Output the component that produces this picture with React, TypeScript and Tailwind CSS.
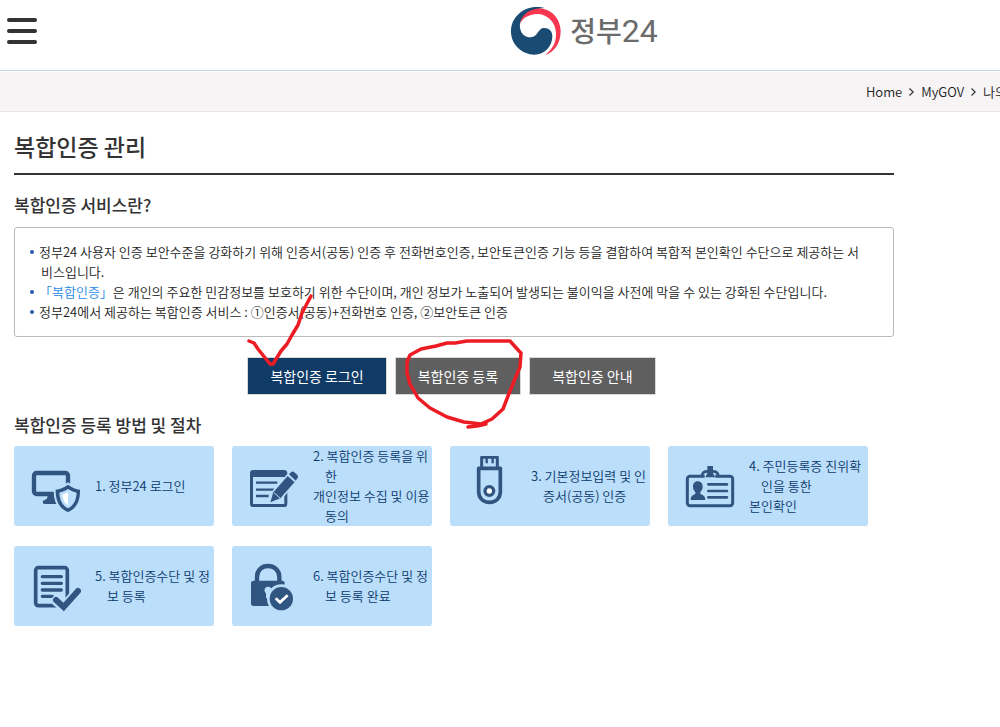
import type { ReactNode } from "react";

const INK = "#2f5580";
const CARD = "#bbdefb";

const StepIcon = ({ children }: { children: ReactNode }) => (
  <svg className="ml-[17px] h-[60px] w-[50px] shrink-0" viewBox="63 48 150 180" fill="none" aria-hidden="true">
    {children}
  </svg>
);

const MonitorIcon = () => (
  <StepIcon>
    <rect x="72" y="99" width="102" height="63" rx="8" stroke={INK} strokeWidth="13" />
    <path d="M113 166h34v14h6v12H104q-6 0-6-6t8-7q7-2 7-13Z" fill={INK} />
    <path
      d="M174 134C161 144 149 147 137 149C136 181 148 206 174 216C200 206 211 181 210 149C198 147 187 144 174 134Z"
      fill={INK}
      stroke={CARD}
      strokeWidth="12"
      paintOrder="stroke"
    />
    <path d="M174 147C165 153 157 156 148 158C149 180 157 196 174 205C191 196 199 180 200 158C190 156 183 153 174 147Z" fill={CARD} />
    <path d="M174 156C169 160 163 162 157 164C158 178 163 189 174 196Z" fill="#fff" />
  </StepIcon>
);

const FormIcon = () => (
  <StepIcon>
    <path d="M76 90h92q10 0 10 10v91q0 10-10 10H76q-10 0-10-10v-91q0-10 10-10Zm-1 21v81h94v-81Z" fill={INK} fillRule="evenodd" />
    <path d="M84 128h64M84 149h54M84 168h38" stroke={INK} strokeWidth="7" />
    <g fill={INK} stroke={CARD} strokeWidth="10" paintOrder="stroke" strokeLinejoin="round">
      <path d="M127 187l9-30 43-49 21 18-43 49Z" />
      <path d="M183 103l6-6q5-5 10 0l9 8q5 5 0 10l-5 7Z" />
    </g>
    <path d="M181 105l21 19M138 158l18 16" stroke={CARD} strokeWidth="3" />
  </StepIcon>
);

const UsbIcon = () => (
  <StepIcon>
    <path d="M107 82V52h47v30" stroke={INK} strokeWidth="9" strokeLinejoin="round" />
    <path d="M122 54v16M140 54v16" stroke={INK} strokeWidth="7" />
    <path d="M98 85h65v70c0 20-14 32-32.500 32S98 175 98 155Z" stroke={INK} strokeWidth="11" strokeLinejoin="round" />
    <circle cx="130" cy="153" r="13" fill="#fff" stroke={INK} strokeWidth="10" />
  </StepIcon>
);

const IdCardIcon = () => (
  <StepIcon>
    <rect x="70" y="109" width="136" height="88" rx="8" stroke={INK} strokeWidth="9" />
    <path d="M114 108c1-11 7-14 16-14h17c9 0 15 3 16 14" stroke={INK} strokeWidth="8" />
    <path d="M122 102h32v15h-32Z" fill={CARD} />
    <path d="M130 78h17v22l7 12h-30l6-12Z" fill={INK} />
    <path
      d="M101 124c10 0 15 7 15 16c0 7-3 12-7 16v6c7 3 15 5 15 18H80c0-13 8-15 14-18v-6c-4-4-7-9-7-16c0-9 5-16 14-16Z"
      fill={INK}
    />
    <path d="M133 133h56M133 153h56M133 172h56" stroke={INK} strokeWidth="8" strokeLinecap="round" />
  </StepIcon>
);

const DocumentIcon = () => (
  <StepIcon>
    <rect x="77" y="83" width="95" height="114" rx="8" stroke={INK} strokeWidth="11" />
    <path d="M97 110h57M97 130h57M97 150h57M97 169h30" stroke={INK} strokeWidth="10" strokeLinecap="round" />
    <path d="M138 182l23 20 43-49" stroke={CARD} strokeWidth="30" strokeLinejoin="round" strokeLinecap="round" />
    <path d="M138 180l23 21 43-48" stroke={INK} strokeWidth="18" strokeLinecap="round" />
  </StepIcon>
);

const LockIcon = () => (
  <StepIcon>
    <path d="M87 126v-15c0-21 15-33 33-33s34 12 34 33v15" stroke={INK} strokeWidth="13" />
    <rect x="69" y="122" width="101" height="76" rx="8" fill={INK} />
    <path d="M114 174v-14c-9-9-3-20 6-20c9 0 14 8 10 17v20Z" fill={CARD} />
    <circle cx="160" cy="176" r="43" fill={CARD} />
    <circle cx="160" cy="176" r="35" fill={INK} />
    <path d="M143 175l13 12 23-21" stroke="#fff" strokeWidth="8" />
  </StepIcon>
);

const steps = [
  { icon: <MonitorIcon />, lines: ["1. 정부24 로그인"] },
  { icon: <FormIcon />, lines: ["2. 복합인증 등록을 위한", "개인정보 수집 및 이용 동의"] },
  { icon: <UsbIcon />, lines: ["3. 기본정보입력 및 인증서(공동) 인증"] },
  { icon: <IdCardIcon />, lines: ["4. 주민등록증 진위확인을 통한", "본인확인"] },
  { icon: <DocumentIcon />, lines: ["5. 복합인증수단 및 정보 등록"] },
  { icon: <LockIcon />, lines: ["6. 복합인증수단 및 정보 등록 완료"] },
];

const Header = () => (
  <header className="flex h-[71px] items-start border-b border-[#c8d4e2]">
    <button type="button" aria-label="메뉴" className="mt-[18px] ml-[7px] flex w-[30px] shrink-0 flex-col gap-[7px]">
      <span className="h-1 w-full rounded-sm bg-[#333]" />
      <span className="h-1 w-full rounded-sm bg-[#333]" />
      <span className="h-1 w-full rounded-sm bg-[#333]" />
    </button>
    <div className="flex flex-1 justify-center pt-[5px] pl-[131px]">
      <a href="#home" className="flex items-center gap-2 text-[#6b6b6b]">
        <svg className="h-[50px] w-[52px]" viewBox="30 18 156 150" aria-hidden="true">
          <path
            d="M135 24C118 19 85 17 60 38C38 56 32 78 33 97C34 134 66 164 103 164C134 164 157 140 157 109C157 92 146 83 130 84C115 85 113 110 93 112C72 113 57 95 60 72C64 45 95 27 135 24Z"
            fill="#1a4b73"
          />
          <path
            d="M60 72C64 42 95 22 128 26C160 32 182 60 182 94C182 130 162 158 135 165C158 148 169 128 168 100C167 65 140 40 108 42C82 44 66 57 60 72Z"
            fill="#f7364f"
          />
        </svg>
        <span className="text-[28px] leading-[50px] font-medium">
          정부<span className="font-['Roboto'] text-[32px] font-normal">24</span>
        </span>
      </a>
    </div>
  </header>
);

const Breadcrumb = () => (
  <nav
    aria-label="breadcrumb"
    className="mt-px flex h-10 items-center justify-end overflow-hidden border-b border-[#e6e4e5] bg-[#f6f4f5]"
  >
    <ol className="-mr-[7px] flex shrink-0 items-center gap-[7px] text-[13px] leading-5">
      <li><a href="#home">Home</a></li>
      <li aria-hidden="true"><Chevron /></li>
      <li><a href="#mygov">MyGOV</a></li>
      <li aria-hidden="true"><Chevron /></li>
      <li><a href="#my">나의</a></li>
    </ol>
  </nav>
);

const Chevron = () => (
  <svg className="h-2 w-[5px]" viewBox="0 0 5 8" fill="none" stroke="#333" strokeWidth="1.2">
    <path d="M0.500 0.500L4.200 4L0.500 7.500" />
  </svg>
);

const Bullet = ({ children }: { children: ReactNode }) => (
  <li className="flex gap-1">
    <span className="mt-2 size-1 shrink-0 rounded-full bg-[#2a5db0]" />
    <p className="pl-[3px] -indent-[2px]">{children}</p>
  </li>
);

// Hand-drawn pen marks lying over the buttons
const PenMarks = () => (
  <svg
    className="pointer-events-none absolute -top-[67px] left-[226px] h-[145px] w-[420px]"
    viewBox="0 0 420 145"
    fill="none"
    stroke="#ed1c24"
    strokeWidth="3.5"
    strokeLinecap="round"
    strokeLinejoin="round"
    aria-hidden="true"
  >
    <path d="M9 51L14 53L18 59L30 74L33 74L41 61L47 54L52 45L58 35L62 23L71 6" />
    <path d="M196 56L181 59L170 65L167 72L167 83L170 94L178 108L190 118L207 127L224 132L241 134L252 129L263 119L270 101L277 84L280 77L281 63L279 61L270 51L227 51L215 53L207 53Z" />
    <path d="M228 137L237 136L246 134" />
  </svg>
);

const App = () => {
  return (
    <div className="min-h-screen overflow-hidden bg-white font-['Noto_Sans_CJK_KR','Noto_Sans',sans-serif] font-[350] text-[#222]">
      <Header />
      <Breadcrumb />
      <main className="max-w-[908px] px-[14px]">
        <h1 className="border-b-2 border-[#333] pt-[18px] pb-[11px] text-[23px] leading-8 font-medium text-[#333]">복합인증 관리</h1>

        <section>
          <h2 className="pt-[18px] pb-[10px] text-[17px] leading-6 font-medium text-[#333]">복합인증 서비스란?</h2>
          <ul className="rounded-[3px] border border-[#bbb] py-[14px] pr-[28px] pl-[15px] text-[13px] leading-5">
            <Bullet>
              정부24 사용자 인증 보안수준을 강화하기 위해 인증서(공동) 인증 후 전화번호인증, 보안토큰인증 기능 등을 결합하여 복합적 본인확인 수단으로 제공하는 서비스입니다.
            </Bullet>
            <Bullet>
              <a href="#service" className="text-[#1e88e5]">「복합인증」</a>은 개인의 주요한 민감정보를 보호하기 위한 수단이며, 개인 정보가 노출되어 발생되는 불이익을 사전에 막을 수 있는 강화된 수단입니다.
            </Bullet>
            <Bullet>정부24에서 제공하는 복합인증 서비스 : ①인증서(공동)+전화번호 인증, ②보안토큰 인증</Bullet>
          </ul>
          <div className="relative mt-5 flex justify-center gap-2 pr-[5px] text-[14px] leading-5 font-normal text-white">
            <button type="button" className="border border-[#d9d9d9] bg-[#0f3b66] px-[22px] py-2">복합인증 로그인</button>
            <button type="button" className="border border-[#d9d9d9] bg-[#5f5f5f] px-[22px] py-2">복합인증 등록</button>
            <button type="button" className="border border-[#d9d9d9] bg-[#5f5f5f] px-[22px] py-2">복합인증 안내</button>
            <PenMarks />
          </div>
        </section>

        <section>
          <h2 className="pt-[18px] pb-[9px] text-[17px] leading-6 font-medium text-[#333]">복합인증 등록 방법 및 절차</h2>
          <ol className="flex flex-wrap gap-x-[18px] gap-y-5 text-[13px] leading-5 text-[#0b3a6b]">
            {steps.map((step) => (
              <li key={step.lines[0]} className="flex h-20 w-[200px] items-center rounded-[3px] bg-[#bbdefb]">
                {step.icon}
                <div className="ml-[14px] flex-1">
                  {step.lines.map((line) => (
                    <p key={line} className="pl-3 -indent-3">{line}</p>
                  ))}
                </div>
              </li>
            ))}
          </ol>
        </section>
      </main>
    </div>
  );
};

export default App;
